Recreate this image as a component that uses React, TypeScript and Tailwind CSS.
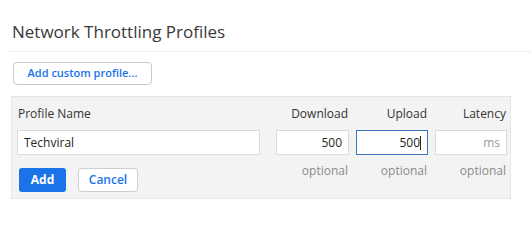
export default function App() {
  return (
    <div className="w-[531px] h-[248px] bg-white overflow-hidden font-['Open_Sans',_'Noto_Sans',_sans-serif] text-[#333]">
      {/* header */}
      <div className="ml-2 pl-1 pt-[20px] h-[52px] border-b border-[#eeeeee]">
        <h1 className="text-[17px] leading-[24px] text-[#3a3a3a] font-normal">Network Throttling Profiles</h1>
      </div>

      <div className="flex pl-[13px] pt-[10px]">
        <button className="h-[23px] w-[139px] rounded-[4px] border border-[#c8c8c8] bg-white text-[11px] font-semibold text-[#1a73e8]">
          Add custom profile...
        </button>
      </div>

      {/* edit panel */}
      <div className="ml-[11px] mt-[11px] w-[500px] h-[103px] bg-[#f3f3f3] border border-[#e6e6e6] pl-[5px] pt-[9px]">
        <div className="flex text-[12px] leading-[16px] text-[#333]">
          <div className="w-[243px] pl-[1px]">Profile Name</div>
          <div className="w-[73px] ml-[16px] text-right pr-[1px]">Download</div>
          <div className="w-[72px] ml-[7px] text-right pr-[1px]">Upload</div>
          <div className="w-[72px] ml-[7px] text-right pr-[1px]">Latency</div>
        </div>

        <div className="flex mt-[8px] text-[12px]">
          <div className="w-[243px] h-[25px] bg-white border border-[#dadada] flex items-center px-[6px] text-[#222]">
            Techviral
          </div>
          <div className="w-[73px] h-[25px] ml-[16px] bg-white border border-[#dadada] flex items-center justify-end px-[6px] text-[#222]">
            500
          </div>
          <div className="w-[72px] h-[25px] ml-[7px] bg-white border border-[#3b78c0] flex items-center justify-end px-[6px] text-[#222]">
            500<span className="w-px h-[14px] bg-[#222]" />
          </div>
          <div className="w-[72px] h-[25px] ml-[7px] bg-white border border-[#dadada] flex items-center justify-end px-[6px] text-[#9a9a9a]">
            ms
          </div>
        </div>

        <div className="flex items-start mt-[8px]">
          <div className="w-[243px] flex pt-[5px] pl-[2px] gap-[12px]">
            <button className="w-[47px] h-[24px] rounded-[3px] bg-[#1a73e8] text-white text-[12px] font-bold">Add</button>
            <button className="w-[60px] h-[24px] rounded-[3px] border border-[#cfcfcf] bg-white text-[#1a73e8] text-[12px] font-semibold">Cancel</button>
          </div>
          <div className="w-[73px] ml-[16px] text-right text-[12px] leading-[16px] text-[#8a8a8a] pr-[1px]">optional</div>
          <div className="w-[72px] ml-[7px] text-right text-[12px] leading-[16px] text-[#8a8a8a] pr-[1px]">optional</div>
          <div className="w-[72px] ml-[7px] text-right text-[12px] leading-[16px] text-[#8a8a8a] pr-[1px]">optional</div>
        </div>
      </div>
    </div>
  );
}
